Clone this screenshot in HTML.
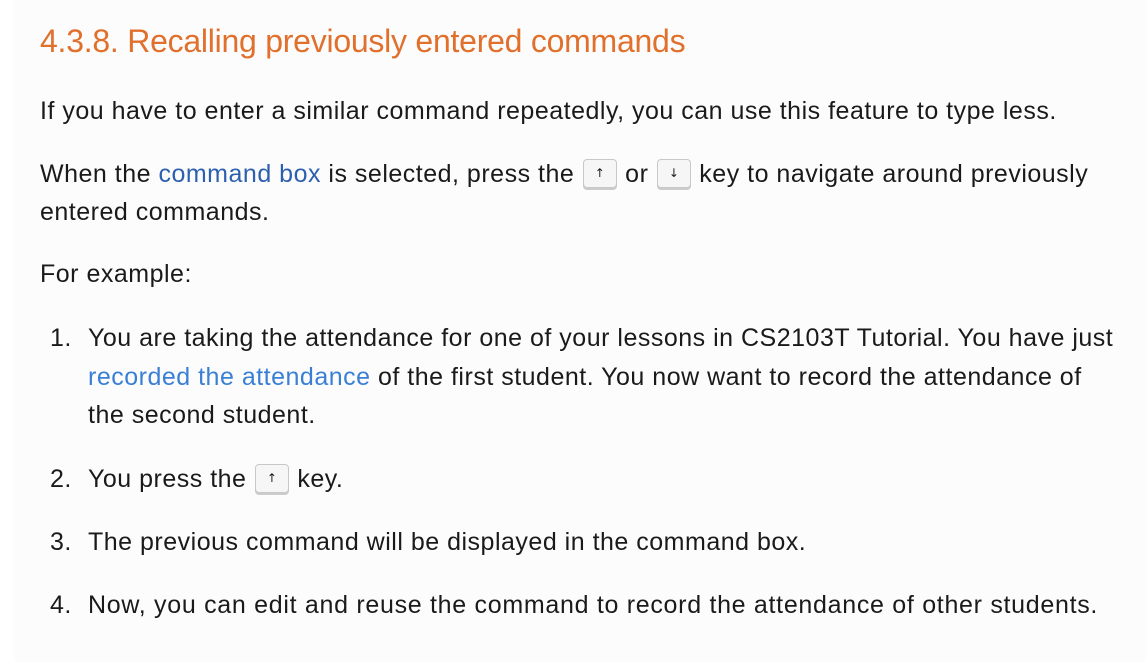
<!DOCTYPE html>
<html><head><style>
html,body{margin:0;padding:0;}
body{width:1146px;height:662px;background:#fff;overflow:hidden;font-family:"Liberation Sans",Helvetica,Arial,sans-serif;color:#1a1a1a;}
.main{position:absolute;left:14px;top:0;width:1132px;height:662px;background:#fcfcfc;}
.t{position:absolute;white-space:nowrap;font-size:25px;line-height:38px;letter-spacing:0.5px;}
h2{position:absolute;left:40px;top:21px;margin:0;font-weight:normal;font-size:32px;line-height:40px;color:#e0702b;white-space:nowrap;letter-spacing:-0.25px;}
a{color:#2c5fb0;text-decoration:none;}
a.l{color:#3a7fd6;}
kbd{display:inline-block;width:32px;height:27px;line-height:27px;border:1px solid #c8c8c8;border-radius:4px;background:#f6f6f6;box-shadow:0 2px 0 #ccc;text-align:center;font-size:12px;font-family:"DejaVu Sans",sans-serif;vertical-align:middle;margin:0 1px;position:relative;top:-2px;letter-spacing:0;}
.n{position:absolute;left:50px;}
</style></head><body>
<div class="main"></div>
<h2>4.3.8. Recalling previously entered commands</h2>
<div class="t" style="left:40px;top:92px">If you have to enter a similar command repeatedly, you can use this feature to type less.</div>
<div class="t" style="left:40px;top:155px">When the <a>command box</a> is selected, press the <kbd>↑</kbd> or <kbd>↓</kbd> key to navigate around previously</div>
<div class="t" style="left:40px;top:193px">entered commands.</div>
<div class="t" style="left:40px;top:255px">For example:</div>
<div class="t n" style="top:319px">1.</div>
<div class="t" style="left:88px;top:319px">You are taking the attendance for one of your lessons in CS2103T Tutorial. You have just</div>
<div class="t" style="left:88px;top:358px"><a class="l">recorded the attendance</a> of the first student. You now want to record the attendance of</div>
<div class="t" style="left:88px;top:396px">the second student.</div>
<div class="t n" style="top:460px">2.</div>
<div class="t" style="left:88px;top:460px">You press the <kbd>↑</kbd> key.</div>
<div class="t n" style="top:523px">3.</div>
<div class="t" style="left:88px;top:523px">The previous command will be displayed in the command box.</div>
<div class="t n" style="top:586px">4.</div>
<div class="t" style="left:88px;top:586px;letter-spacing:0.7px">Now, you can edit and reuse the command to record the attendance of other students.</div>
</body></html>
